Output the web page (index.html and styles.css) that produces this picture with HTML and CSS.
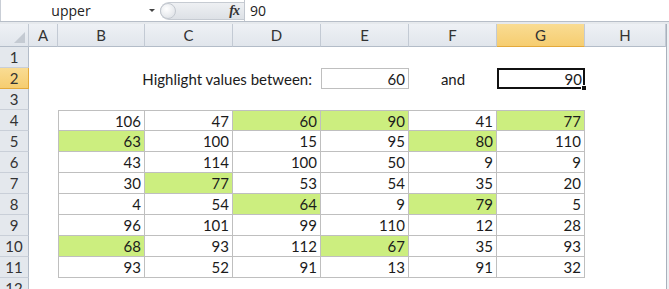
FILE: index.html
```html
<!DOCTYPE html>
<html lang="en">

<head>
    <meta charset="UTF-8">
    <title>Highlight values between</title>
    <link rel="stylesheet" href="styles.css">
</head>

<body>
    <div class="window">
        <!-- name box + formula bar -->
        <div class="formula-bar">
            <div class="name-box">
                <span class="name">upper</span>
                <span class="drop"></span>
            </div>
            <div class="grip">
                <span class="knob"></span>
                <span class="fx">fx</span>
            </div>
            <div class="formula">90</div>
        </div>

        <div class="sheet-wrap">
            <div class="sheet">
                <div class="corner"><span class="tri"></span></div>
                <div class="col-head">A</div>
                <div class="col-head">B</div>
                <div class="col-head">C</div>
                <div class="col-head">D</div>
                <div class="col-head">E</div>
                <div class="col-head">F</div>
                <div class="col-head active">G</div>
                <div class="col-head">H</div>

                <div class="row-head r1">1</div>
                <div class="row-head r2 active">2</div>
                <div class="row-head r3">3</div>
                <div class="row-head r4">4</div>
                <div class="row-head r5">5</div>
                <div class="row-head r6">6</div>
                <div class="row-head r7">7</div>
                <div class="row-head r8">8</div>
                <div class="row-head r9">9</div>
                <div class="row-head r10">10</div>
                <div class="row-head r11">11</div>
                <div class="row-head r12">12</div>

                <div class="label">Highlight values between:</div>
                <div class="input lower">60</div>
                <div class="and">and</div>
                <div class="input upper selected">90<span class="handle"></span></div>

                <div class="data">
                    <div class="cell">106</div><div class="cell">47</div><div class="cell hit">60</div><div class="cell hit">90</div><div class="cell">41</div><div class="cell hit">77</div>
                    <div class="cell hit">63</div><div class="cell">100</div><div class="cell">15</div><div class="cell">95</div><div class="cell hit">80</div><div class="cell">110</div>
                    <div class="cell">43</div><div class="cell">114</div><div class="cell">100</div><div class="cell">50</div><div class="cell">9</div><div class="cell">9</div>
                    <div class="cell">30</div><div class="cell hit">77</div><div class="cell">53</div><div class="cell">54</div><div class="cell">35</div><div class="cell">20</div>
                    <div class="cell">4</div><div class="cell">54</div><div class="cell hit">64</div><div class="cell">9</div><div class="cell hit">79</div><div class="cell">5</div>
                    <div class="cell">96</div><div class="cell">101</div><div class="cell">99</div><div class="cell">110</div><div class="cell">12</div><div class="cell">28</div>
                    <div class="cell hit">68</div><div class="cell">93</div><div class="cell">112</div><div class="cell hit">67</div><div class="cell">35</div><div class="cell">93</div>
                    <div class="cell">93</div><div class="cell">52</div><div class="cell">91</div><div class="cell">13</div><div class="cell">91</div><div class="cell">32</div>
                </div>
            </div>
            <div class="vscroll"></div>
        </div>
    </div>
</body>

</html>
```

FILE: styles.css
```css
* {
    padding: 0;
    margin: 0;
    box-sizing: border-box;
}

body {
    font-family: Lato, "Open Sans", sans-serif;
    color: #1b1b1b;
    background: #fff;
    overflow: hidden;
}

.window {
    width: 669px;
    height: 289px;
    overflow: hidden;
}

/* Formula bar */
.formula-bar {
    display: flex;
    height: 22px;
    background: #fff;
    border-bottom: 1px solid #b7bec8;
}

.name-box {
    width: 158px;
    display: flex;
    align-items: center;
    border-left: 1px solid #c9ced6;
}

.name {
    width: 140px;
    text-align: center;
    font-family: "Open Sans", sans-serif;
    font-size: 14px;
    color: #222;
}

.drop {
    margin-left: 8px;
    width: 0;
    height: 0;
    border-left: 3px solid transparent;
    border-right: 3px solid transparent;
    border-top: 3px solid #444;
}

.grip {
    width: 84px;
    height: 18px;
    margin: 2px 0 0 2px;
    border-radius: 9px 0 0 9px;
    background: linear-gradient(#eef0f3, #dde1e6);
    border: 1px solid #c6cbd2;
    border-right: none;
    display: flex;
    align-items: center;
    justify-content: space-between;
    padding-right: 5px;
}

.knob {
    width: 16px;
    height: 16px;
    border-radius: 50%;
    background: radial-gradient(circle at 40% 35%, #ffffff, #e4e7eb 70%);
    border: 1px solid #c3c8cf;
    margin-left: -1px;
}

.fx {
    font-family: "Liberation Serif", serif;
    font-style: italic;
    font-weight: bold;
    font-size: 14px;
    color: #333;
    letter-spacing: -1px;
}

.formula {
    flex: 1;
    border-left: 1px solid #c2c7cf;
    padding-left: 5px;
    font-family: "Open Sans", sans-serif;
    font-size: 14px;
    line-height: 21px;
    color: #222;
}

/* Worksheet */
.sheet-wrap {
    display: flex;
    padding-top: 2px;
    background: #e6e9ed;
}

.sheet {
    display: grid;
    grid-template-columns: 29px 29px 87px repeat(5, 88px) 81px;
    grid-template-rows: 23px repeat(12, 21px);
    background: #fff;
}

.vscroll {
    width: 3px;
    border-left: 1px solid #a9b1bc;
    background: #eef0f3;
}

.corner,
.col-head,
.row-head {
    background: linear-gradient(#eef1f5, #e1e6ec);
    border-right: 1px solid #c3cad4;
    border-bottom: 1px solid #b3bcc8;
    font-size: 15px;
    color: #333;
    display: flex;
    align-items: center;
    justify-content: center;
}

.corner {
    position: relative;
}

.corner .tri {
    position: absolute;
    right: 3px;
    bottom: 3px;
    width: 0;
    height: 0;
    border-left: 11px solid transparent;
    border-bottom: 11px solid #c4cad2;
}

.row-head {
    grid-column: 1;
    background: #e4e8ed;
    border-bottom-color: #c9cfd8;
    border-right-color: #b3bcc8;
}

.r1 { grid-row: 2; }
.r2 { grid-row: 3; }
.r3 { grid-row: 4; }
.r4 { grid-row: 5; }
.r5 { grid-row: 6; }
.r6 { grid-row: 7; }
.r7 { grid-row: 8; }
.r8 { grid-row: 9; }
.r9 { grid-row: 10; }
.r10 { grid-row: 11; }
.r11 { grid-row: 12; }
.r12 { grid-row: 13; }

.col-head.active,
.row-head.active {
    background: linear-gradient(#f9dc93, #f6cd70);
    border-bottom-color: #e3a93b;
}

.row-head.active {
    border-right-color: #e3a93b;
}

/* Row 2: criteria */
.label,
.input,
.and,
.cell {
    font-size: 15px;
    display: flex;
    align-items: center;
}

.label {
    grid-column: 3 / 6;
    grid-row: 3;
    justify-content: flex-end;
    padding-right: 9px;
}

.input {
    grid-row: 3;
    justify-content: flex-end;
    padding-right: 3px;
    border: 1px solid #bfbfbf;
}

.lower {
    grid-column: 6;
}

.and {
    grid-column: 7;
    grid-row: 3;
    justify-content: center;
}

.upper {
    grid-column: 8;
    position: relative;
}

.selected {
    border: 2px solid #111;
    padding-right: 1px;
}

.handle {
    position: absolute;
    right: -4px;
    bottom: -4px;
    width: 6px;
    height: 6px;
    background: #111;
    border: 1px solid #fff;
}

/* Data block B4:G11 */
.data {
    grid-column: 3 / 9;
    grid-row: 5 / 13;
    display: grid;
    grid-template-columns: 86px repeat(5, 88px);
    grid-template-rows: 20px repeat(7, 21px);
    border-top: 1px solid #bfbfbf;
    border-left: 1px solid #bfbfbf;
}

.cell {
    justify-content: flex-end;
    padding-right: 3px;
    border-right: 1px solid #bfbfbf;
    border-bottom: 1px solid #bfbfbf;
}

.hit {
    background: #ccee7f;
}
```
